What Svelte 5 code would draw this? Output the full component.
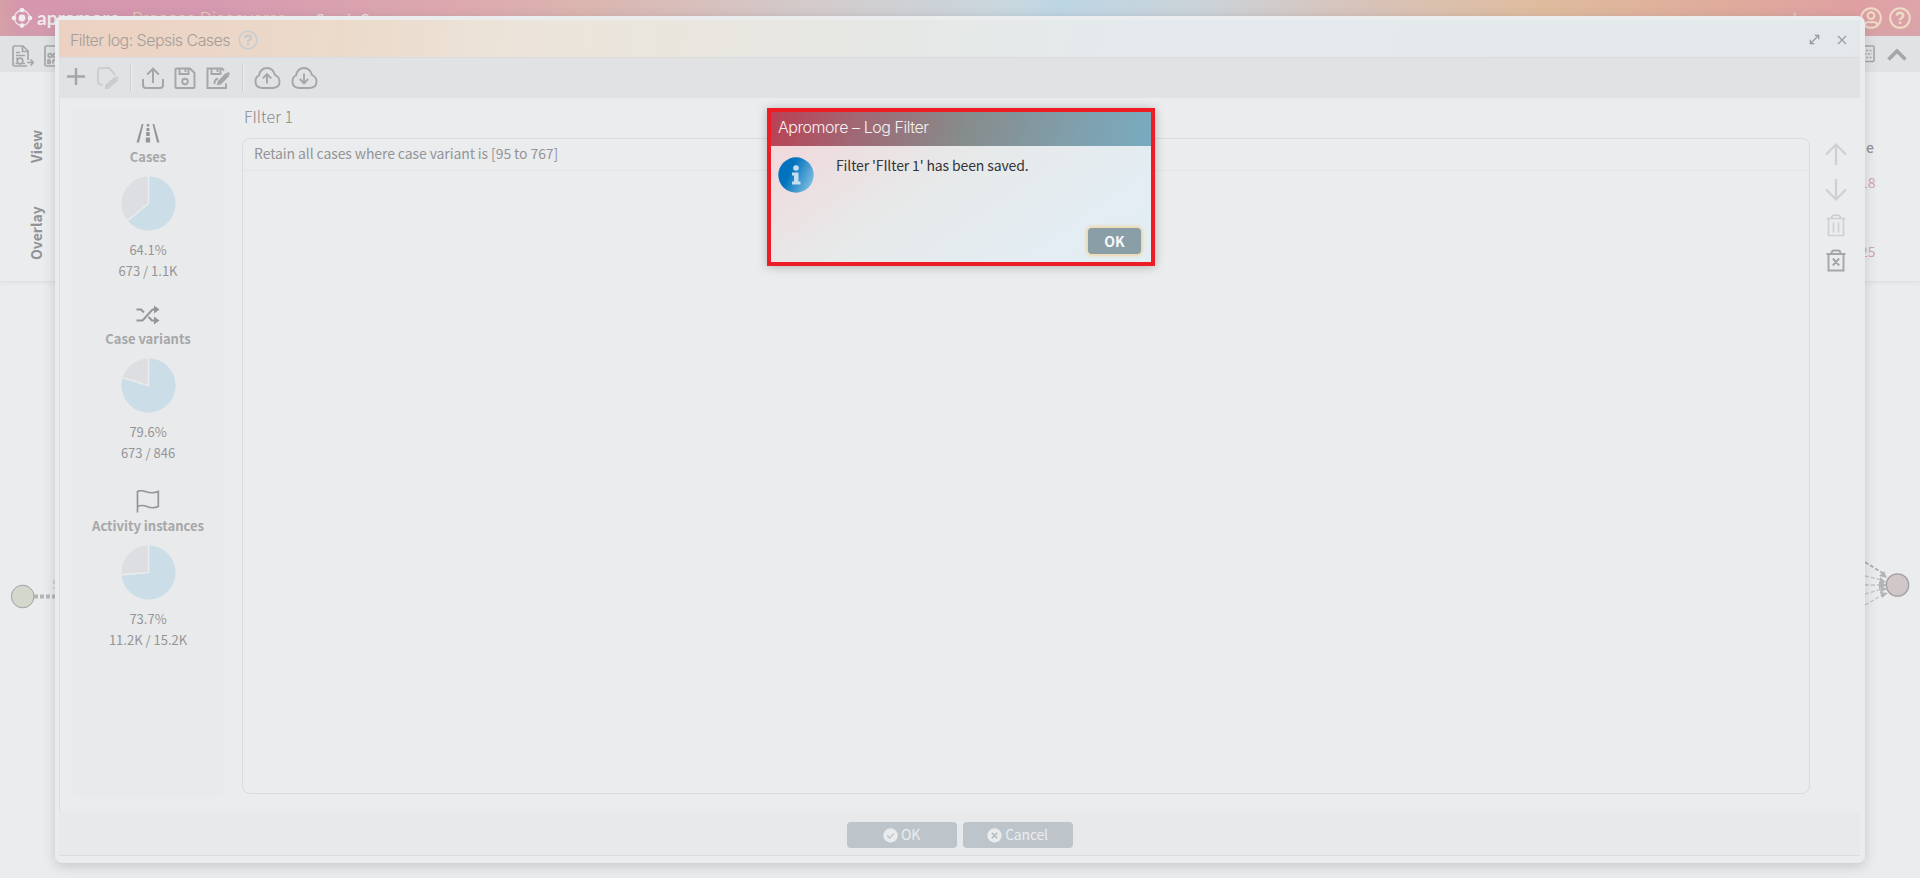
<script>
  const stats = [
    { icon: 'road', label: 'Cases', pct: 64.1, count: '673 / 1.1K' },
    { icon: 'shuffle', label: 'Case variants', pct: 79.6, count: '673 / 846' },
    { icon: 'flag', label: 'Activity instances', pct: 73.7, count: '11.2K / 15.2K' }
  ];
  function point(pct) {
    const a = (pct / 100) * Math.PI * 2;
    return `${(27.5 + 27 * Math.sin(a)).toFixed(2)} ${(27.5 - 27 * Math.cos(a)).toFixed(2)}`;
  }
</script>

<div class="page">
  <header class="top">
    <svg class="logo" width="22" height="22" viewBox="0 0 22 22">
      <circle cx="11" cy="11" r="7.6" fill="none" stroke="#f1ecef" stroke-width="1.2" />
      <g fill="#f1ecef"><circle cx="11" cy="11" r="3.4" /><circle cx="11" cy="3" r="2.3" /><circle cx="11" cy="18.6" r="2.3" /><circle cx="3" cy="11" r="2.3" /><circle cx="19" cy="11" r="2.3" /></g>
    </svg>
    <span class="brand">apromore</span>
    <span class="product">Process Discoverer</span>
    <span class="crumb-sep">&gt;</span>
    <span class="crumb">Sepsis Cases</span>
    <span class="user">demouser</span>
    <svg width="22" height="22" viewBox="0 0 22 22" fill="none" stroke="#ecdcc6" stroke-width="2"><circle cx="11" cy="11" r="9.8" /><circle cx="11" cy="8.6" r="3.4" /><path d="M4.5 17.5Q6 14.7 8.5 14.9Q11 15.8 13.500 14.9Q16 14.7 17.500 17.500" /></svg>
    <svg class="help" width="22" height="22" viewBox="0 0 22 22" fill="none" stroke="#ecdcc6" stroke-width="2"><circle cx="11" cy="11" r="9.800" /><path stroke-width="2.500" d="M7.800 8.700Q8 5.800 11 5.800T14.200 8.600Q14.200 10 12.500 11Q11 11.800 11 13.200M11 14.700V17.100" /></svg>
  </header>
  <div class="tools">
    <svg width="22" height="22" viewBox="0 0 22 22" fill="none" stroke="#a5a6a8" stroke-width="1.7"><path d="M15 21H2.500Q1 21 1 19.500V2.500Q1 1 2.500 1H11L16 6V15M10.500 1V6.500H16M4 7.500H8M4 10.500H13" /><circle cx="8" cy="16" r="2.800" /><path d="M4 13.500H7M3.500 18.500H5M11 18.500H13M15 17.500H21M18.500 14.500L21.300 17.500L18.500 20.500" /></svg>
    <svg class="second" width="22" height="22" viewBox="0 0 22 22" fill="none" stroke="#a5a6a8" stroke-width="1.7"><path d="M13 21H2.500Q1 21 1 19.500V2.500Q1 1 2.500 1H13" /><circle cx="6" cy="10.500" r="1.800" /><circle cx="11" cy="10.500" r="1.800" /><path d="M4 15V18.500H5.500Q7 16.800 5.500 15ZM9 15H12M9 15V18.500" /></svg>
    <svg class="grid" width="18" height="18" viewBox="0 0 18 18" fill="none" stroke="#a5a6a8" stroke-width="1.600"><rect x="1" y="1" width="16" height="15.500" rx="1" /><path stroke-dasharray="2 1.500" d="M2 5.500H15M4 9H15M2 12.500H15" /></svg>
    <svg class="chev" width="22" height="22" viewBox="0 0 22 22" fill="none" stroke="#a5a6a8" stroke-width="3.600"><path d="M2.500 15.500L11 7L19.500 15.500" /></svg>
  </div>
  <section class="sidepanel">
    <div class="tabs"><span>View</span><span>Overlay</span></div>
    <div class="figures"><b>e</b><span>18</span><span>25</span></div>
  </section>
  <section class="canvas">
    <svg width="100" height="60" viewBox="0 0 100 60"><path d="M34 26.500H70" stroke="#b4b5b7" stroke-width="4" stroke-dasharray="4 2" /><circle cx="22.700" cy="26.500" r="11.300" fill="#d4d7cc" stroke="#a0a1a4" /><text x="52" y="18.500" font-size="12" fill="#c5c6c8">S</text></svg>
    <svg class="end" width="90" height="80" viewBox="0 0 90 80" fill="none" stroke="#c0c1c3" stroke-width="1.300" stroke-dasharray="4 2"><path stroke="#adaeb1" stroke-width="1.800" d="M35 12L54 24" /><path d="M35 26L52 30M35 35H52M35 44L52 39M35 55L54 44" /><path stroke="none" fill="#b3b4b6" d="M57 28L49 26L54 21ZM56 32L50 34V27ZM57 35L49 39V31ZM57 39L50 43L51 36ZM58 43L52 48L50 42Z" /><circle cx="67.500" cy="35" r="11.200" fill="#d1c6c8" stroke="#a0a1a4" stroke-dasharray="none" /></svg>
  </section>

  <section class="modal">
    <header class="titlebar">
      <span class="title">Filter log: Sepsis Cases</span>
      <svg width="20" height="20" viewBox="0 0 20 20" fill="none" stroke="#c9cccf" stroke-width="1.600"><circle cx="10" cy="10" r="8.800" /><path stroke-width="2.400" d="M7 8Q7 5.500 10 5.500T13 8Q13 9.200 11.300 10Q10 10.700 10 12M10 13.300V15.500" /></svg>
      <span class="grow"></span>
      <svg width="11" height="11" viewBox="0 0 11 11" fill="none" stroke="#96999b" stroke-width="1.200"><path d="M1.500 9.500L9.500 1.500M5.800 1.300H9.700V5.200M1.300 5.800V9.700H5.200" /></svg>
      <svg class="close" width="10" height="10" viewBox="0 0 10 10" fill="none" stroke="#999b9d" stroke-width="1.200"><path d="M1 1L9 9M9 1L1 9" /></svg>
    </header>
    <div class="toolbar">
      <svg class="t-add" width="18" height="24" viewBox="0 0 18 24"><path d="M9 2V19M0 10.500H18" stroke="#a5a6a8" stroke-width="2.400" /></svg>
      <svg class="t-edit" width="24" height="24" viewBox="0 0 24 24" fill="none" stroke="#cbcccd" stroke-width="1.800"><path d="M6.500 18.500H4.500Q2 18.500 2 16V4.500Q2 2 4.500 2H13L18 7V9.500" /><path d="M10 22V19.500L18.500 12L20.800 14.500L12 22ZM20 10.500L22.500 13" fill="#cbcccd" /></svg>
      <i></i>
      <svg class="t-share" width="24" height="24" viewBox="0 0 24 24" fill="none" stroke="#a5a6a8" stroke-width="2"><path d="M12 17V3M6.200 8.500L12 2.700L17.800 8.500M2 13V19Q2 22 5 22H19Q22 22 22 19V13" /></svg>
      <svg class="t-save" width="22" height="24" viewBox="0 0 22 24" fill="none" stroke="#a5a6a8" stroke-width="1.900"><path d="M2.500 2.500H16L20.500 7V21.500Q20.500 22 20 22H2Q1.500 22 1.500 21.500V3Q1.500 2.500 2.500 2.500ZM5.500 3V8H14.500V3M11.500 3V6" /><circle cx="11" cy="15.500" r="2.800" /></svg>
      <svg class="t-saveas" width="25" height="24" viewBox="0 0 25 24" fill="none" stroke="#a5a6a8" stroke-width="1.900"><path d="M20 17.500V22H1.500V2.500H16L18 4.500M5.500 3V8H14.500V3M11.500 3V6M12 12.500Q8 14 8.500 18" /><path d="M12 18L12.800 15.500L20 8L22 10L14.500 17.500ZM21.500 6.500L23.500 8.500" fill="#a5a6a8" /></svg>
      <i></i>
      {#each [true, false] as up}
        <svg class="cloud" width="27" height="24" viewBox="0 0 27 24" fill="none" stroke="#a5a6a8" stroke-width="1.900"><path d="M8 22Q1.500 21.500 1.500 15.500Q1.500 11 5 9.500Q6.500 2 13 2Q19 2 21 9Q25.500 11 25.500 15.500Q25.500 21.500 19 22Z" />{#if up}<path d="M13 17.500V8.500M8.800 12.300L13 8L17.200 12.300" />{:else}<path d="M13 7.500V17M8.800 13L13 17.300L17.200 13" />{/if}</svg>
      {/each}
    </div>
    <div class="content">
      <aside>
        {#each stats as s}
          <div class="stat">
            {#if s.icon === 'road'}
              <svg width="24" height="24" viewBox="0 0 24 24" fill="#949596"><path d="M5.800 3H7.500L3 21.500H.5ZM16.500 3H18.200L23.500 21.500H21ZM10.700 3H13.200V5.500H10.700ZM10.500 7H13.400V10H10.500ZM10.200 11H13.700V15H10.200ZM9.800 16.500H14.100V21.500H9.800Z" /></svg>
            {:else if s.icon === 'shuffle'}
              <svg width="24" height="24" viewBox="0 0 24 24"><path d="M.5 6.500H5L8 9.500M.5 17.500H6.500L16.500 6.500H19M12.500 14L16 17.500H19" fill="none" stroke="#949596" stroke-width="2" /><path d="M18 2.500L23.500 6.500L18 10.500ZM18 13.500L23.500 17.500L18 21.500Z" fill="#949596" /></svg>
            {:else}
              <svg width="24" height="24" viewBox="0 0 24 24" fill="none" stroke="#949596" stroke-width="1.700"><path d="M1.500 22.500V1.500Q5 -.2 10 1.800Q17 3.800 22.300 1.500V16.500Q17 19 11 16.500Q6 14.500 1.500 16.500" /></svg>
            {/if}
            <b>{s.label}</b>
            <svg class="pie" width="55" height="55" viewBox="0 0 55 55"><circle cx="27.500" cy="27.500" r="27" fill="#dddee2" /><path d={`M27.500 27.500V.5A27 27 0 1 1 ${point(s.pct)}Z`} fill="#cbdee8" /><path d={`M27.500 0V27.500L${point(s.pct)}`} fill="none" stroke="#ebeced" stroke-width="1.500" /></svg>
            <span>{s.pct}%</span>
            <span>{s.count}</span>
          </div>
        {/each}
      </aside>
      <main>
        <h2>FIlter 1</h2>
        <div class="list"><div class="row">Retain all cases where case variant is [95 to 767]</div></div>
      </main>
      <nav>
        <svg width="22" height="22" viewBox="0 0 22 22" fill="none" stroke="#cecfd0" stroke-width="2.200"><path d="M11 22V1.500M1 11.500L11 1.500L21 11.500" /></svg>
        <svg width="22" height="22" viewBox="0 0 22 22" fill="none" stroke="#cecfd0" stroke-width="2.200"><path d="M11 0V20.500M1 10.500L11 20.500L21 10.500" /></svg>
        <svg width="22" height="23" viewBox="0 0 22 23" fill="none" stroke="#cecfd0" stroke-width="1.600"><path d="M1.500 4.500H20.500M6.500 4.500Q6.500 1.200 9 1.200H13Q15.500 1.200 15.500 4.500M3.500 5V21.500H18.500V5M8.500 8.500V18.500M13.500 8.500V18.500" /></svg>
        <svg width="22" height="23" viewBox="0 0 22 23" fill="none" stroke="#a4a6a8" stroke-width="1.900"><path d="M1.500 5H20.500M6.500 4.500Q6.500 1.500 9 1.500H13Q15.500 1.500 15.500 4.500M3.500 5V21.500H18.500V5M7.800 9.500L14.200 16.500M14.200 9.500L7.800 16.500" /></svg>
      </nav>
    </div>
    <footer>
      <button><svg width="15" height="15" viewBox="0 0 15 15"><circle cx="7.500" cy="7.500" r="7.200" fill="#eaebed" /><path d="M4.200 7.500L6.600 10L10.800 5.600" fill="none" stroke="#bdc5cb" stroke-width="1.300" /></svg><span>OK</span></button>
      <button><svg width="15" height="15" viewBox="0 0 15 15"><circle cx="7.500" cy="7.500" r="7.200" fill="#eaebed" /><path d="M4.800 4.800L10.200 10.200M10.200 4.800L4.800 10.200" fill="none" stroke="#b3bbc1" stroke-width="1.600" /></svg><span>Cancel</span></button>
    </footer>
  </section>

  <section class="alert">
    <header>Apromore – Log Filter</header>
    <div class="msg">
      <svg width="36" height="36" viewBox="0 0 36 36"><defs><linearGradient id="info" x1="0" y1=".3" x2="1" y2=".8"><stop offset=".3" stop-color="#0072be" /><stop offset="1" stop-color="#86c3e2" /></linearGradient></defs><circle cx="18" cy="18" r="17.700" fill="url(#info)" /><path d="M14 15.500H20.500V24.500H22.500V27.500H14V24.500H16V18.500H14Z" fill="#c3def1" /><circle cx="18" cy="11" r="2.800" fill="#c3def1" /></svg>
      <p>Filter 'FIlter 1' has been saved.</p>
    </div>
    <button>OK</button>
  </section>
</div>

<style>
  :global(body) { background: #ebecee; overflow: hidden; }
  .page { position: relative; width: 1920px; height: 878px; overflow: hidden; display: flex; flex-direction: column; background: #ebecee; color: #919295; font: 14px/20px "Noto Sans CJK SC", "Noto Sans", sans-serif; }
  * { box-sizing: border-box; }
  svg { display: block; flex: none; }
  .top { height: 36px; flex: none; display: flex; align-items: center; padding: 0 9px 0 11px; white-space: nowrap; background: linear-gradient(rgba(190,175,175,0) 35%, rgba(205,165,170,.35)), linear-gradient(90deg, #d7a0a6 0, #d596ae 1%, #d69ab0 11%, #dda9ae 24%, #dbb6b0 31%, #d3cccd 43%, #c8d8e0 53%, #bdd6e5 55%, #ccd3d8 63%, #d7c4bd 70%, #dfbc9e 80%, #dfad9b 89%, #df9fa2 97%, #dda4aa 100%); }
  .brand { width: 99px; padding: 0 0 1px 4px; font: bold 19px/20px Lato, sans-serif; letter-spacing: .1px; color: #f0eaee; }
  .product { width: 165px; padding-top: 1px; font: 17px/20px Inter, sans-serif; font-weight: 300; letter-spacing: -.05px; color: #e6cfb9; }
  .crumb-sep { width: 19px; padding-top: 2px; color: #eee5e7; }
  .crumb { padding-top: 2px; color: #eee5e7; letter-spacing: -.1px; }
  .user { margin-left: auto; margin-right: 6px; padding-bottom: 1px; color: #e8d0bb; font-size: 14px; }
  .help { margin-left: 7px; }
  .tools { height: 36px; flex: none; display: flex; align-items: center; padding: 3px 12px 0; background: #e1e2e4; }
  .second { margin-left: 10px; }
  .grid { margin-left: auto; margin-top: -3px; }
  .chev { margin-left: 11px; margin-top: -1px; }
  .sidepanel { height: 210px; flex: none; display: flex; justify-content: space-between; border-bottom: 1px solid #e0e1e3; box-shadow: 0 2px 3px #e3e4e6; }
  .tabs { width: 55px; padding: 28px 0 0 26px; }
  .tabs span { writing-mode: vertical-rl; transform: rotate(180deg); width: 20px; height: 80px; display: flex; justify-content: center; font-weight: bold; font-size: 14px; }
  .tabs span:first-child { height: 93px; padding: 0; }
  .figures { width: 60px; display: flex; flex-direction: column; padding-top: 65px; font-size: 14px; color: #d7a3ad; }
  .figures b { color: #929397; font-weight: 500; margin: 0 0 15px 6px; }
  .figures span { margin-bottom: 49px; height: 20px; }
  .canvas { display: flex; align-items: flex-start; justify-content: space-between; padding-top: 288px; }
  .end { margin-top: -20px; }
  .modal { position: absolute; left: 55px; top: 16px; width: 1810px; height: 847px; padding: 4px; border-radius: 7px; background: #ebeced; box-shadow: 0 3px 12px rgba(100,105,110,.28); display: flex; flex-direction: column; }
  .titlebar { height: 37px; flex: none; display: flex; align-items: center; padding: 2px 13px 0 11px; margin-right: 1px; background: linear-gradient(100deg, #ecd1c2 0, #ebdaca 16%, #ece4d9 25%, #e9e6df 36%, #e5e8e6 48%, #e4eaed 59%, #e3e9eb 100%); }
  .title { font: 300 16px/22px Inter, sans-serif; letter-spacing: -.55px; color: #a39e9a; width: 168px; white-space: nowrap; }
  .grow { flex: 1; }
  .close { margin-left: 17px; }
  .toolbar { height: 41px; flex: none; display: flex; align-items: center; padding: 0 0 1px 8px; margin-right: 1px; background: #e1e2e4; border-top: 1px solid #dadbde; }
  .toolbar i { width: 1px; height: 26px; background: #cccdcf; box-shadow: 1px 0 #eeefef; }
  .t-edit { margin: 0 10px 0 11px; }
  .t-share { margin-left: 10px; }
  .t-save { margin-left: 9px; }
  .t-saveas { margin: 0 11px 0 10px; }
  .cloud { margin-left: 11px; margin-right: -1px; }
  .content { flex: 1; min-height: 0; display: flex; border-left: 1px solid #dddee0; padding: 11px 0 0 11px; }
  aside { width: 154px; height: 688px; background: #e9eaeb; border-radius: 5px; padding-top: 12px; }
  .stat { display: flex; flex-direction: column; align-items: center; height: 182px; white-space: nowrap; color: #949597; font-size: 13px; }
  .stat:nth-child(2) { height: 184px; }
  .stat:nth-child(3) { padding-top: 3px; }
  .stat b { color: #a6a7a9; height: 20px; margin-top: 2px; }
  .pie { margin: 9px 0 9px; }
  .stat span { height: 21px; }
  main { margin-left: 17px; width: 1568px; }
  h2 { margin: -4px 0 0 2px; height: 33px; font-size: 16px; line-height: 22px; font-weight: 300; color: #88898c; }
  .list { height: 656px; border: 1px solid #dadbdd; border-radius: 8px; }
  .row { height: 32px; padding: 4px 11px; border-bottom: 1px solid #e3e4e6; color: #939497; letter-spacing: -.1px; }
  nav { display: flex; flex-direction: column; gap: 13px; padding: 34px 0 0 15px; }
  nav svg:nth-child(2) { margin-top: 1px; }
  nav svg:nth-child(4) { margin-top: -1px; }
  .modal footer { height: 45px; flex: none; display: flex; justify-content: center; gap: 6px; padding-top: 11px; margin: 0 1px 3px 0; background: #e7e9ea; border-bottom: 1px solid #d9dbdd; }
  button { border: 0; border-radius: 4px; padding: 0; font: inherit; display: flex; align-items: center; justify-content: center; }
  .modal footer button { width: 110px; height: 26px; background: #bdc5cb; color: #ebedef; gap: 3px; }
  .modal footer button span { padding-bottom: 2px; letter-spacing: -.2px; }
  .modal footer button svg { margin-top: 1px; }
  .alert { position: absolute; left: 767px; top: 108px; width: 388px; height: 158px; border: 4px solid #ee1c25; background: linear-gradient(145deg, #f0dadd 12%, #e7e9e9 43%, #e3edf3 80%, #e2eef4); box-shadow: 0 1px 9px rgba(90,95,100,.4); display: flex; flex-direction: column; }
  .alert header { height: 34px; padding: 4px 7px; font: 300 16px/22px Inter, sans-serif; letter-spacing: -.45px; color: #f5f1f3; background: linear-gradient(107deg, #ba4053, #a16774 22%, #878b8b 50%, #7fa1af 82%, #78abc0); }
  .msg { display: flex; height: 82px; padding: 11px 7px; }
  .msg p { margin: -2px 0 0 22px; color: #333537; letter-spacing: -.13px; }
  .alert button { align-self: flex-end; margin-right: 10px; width: 53px; height: 26px; padding-bottom: 1px; background: #8a9ea8; color: #f7f9fa; font-weight: bold; box-shadow: 0 0 3px 2px #eed8a9; }
</style>
